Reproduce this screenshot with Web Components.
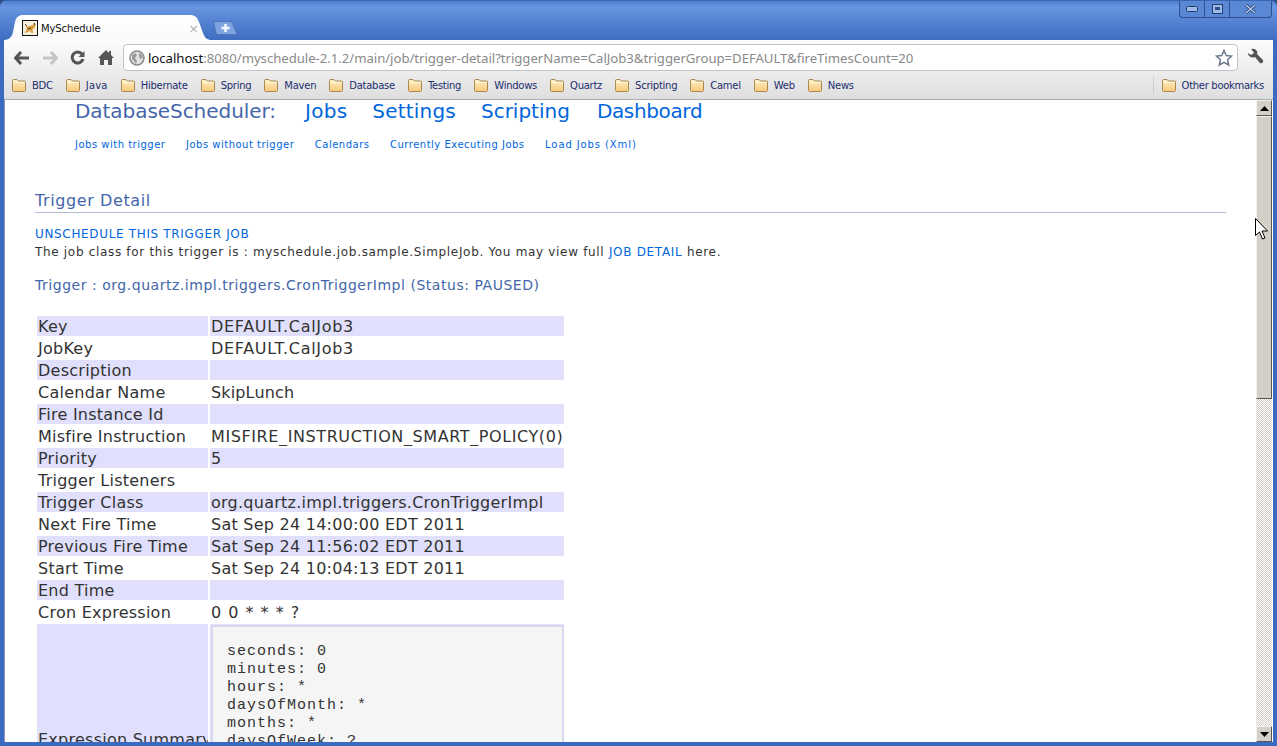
<!DOCTYPE html>
<html>
<head>
<meta charset="utf-8">
<title>MySchedule</title>
<style>
  html, body { margin: 0; height: 100%; overflow: hidden; background: #2f4f86; }
  body { font-family: "DejaVu Sans", Verdana, sans-serif; }
</style>
</head>
<body>
<browser-window>
  <window-tabs slot="tabs"></window-tabs>
  <browser-toolbar slot="toolbar"></browser-toolbar>
  <bookmark-bar slot="bookmarks"></bookmark-bar>
  <page-scrollbar slot="scrollbar"></page-scrollbar>
  <schedule-nav></schedule-nav>
  <trigger-detail></trigger-detail>
</browser-window>

<script>
const folderIcon = `<svg width="16" height="15" viewBox="0 0 16 15" style="flex:none">
  <defs><linearGradient id="fg" x1="0" y1="0" x2="0" y2="1"><stop offset="0" stop-color="#fff0c4"/><stop offset="1" stop-color="#f8c878"/></linearGradient></defs>
  <path d="M1.500 4V2.500q0-1 1-1h3.500l1.500 1.500h6q1 0 1 1v8.500q0 1-1 1h-11q-1 0-1-1z" fill="url(#fg)" stroke="#a58a52"/>
  <path d="M2 4.500h12" stroke="#fff8e0"/>
</svg>`;

class BrowserWindow extends HTMLElement {
  constructor() {
    super();
    this.attachShadow({mode: 'open'}).innerHTML = `<style>
      :host { display: flex; flex-direction: column; position: relative; width: 1277px; height: 746px; overflow: hidden;
              box-sizing: border-box; background: #3a6bc0; border-radius: 7px 7px 0 0; }
      .chrome { background: #e3e3e3; margin: 0 4px; }
      .tabs { margin: 0; }
      .body { flex: 1; min-height: 0; display: flex; margin: 0 4px 4px 4px; background: #fff; border-top: 1px solid #a9acb0; border-left: 1px solid #8c98b0; }
      .page { flex: 1; min-width: 0; overflow: hidden; padding-left: 30px; padding-right: 30px; }
      .cursor { position: absolute; left: 1255px; top: 218px; }
    </style>
    <div class="tabs"><slot name="tabs"></slot></div>
    <div class="chrome"><slot name="toolbar"></slot><slot name="bookmarks"></slot></div>
    <div class="body">
      <div class="page"><slot></slot></div>
      <slot name="scrollbar"></slot>
    </div>
    <svg class="cursor" width="13" height="22" viewBox="0 0 13 22"><path d="M.5.5v17l4-3.500 3 7 2.500-1-3-7h5.500z" fill="#fff" stroke="#000"/></svg>`;
  }
}

class WindowTabs extends HTMLElement {
  constructor() {
    super();
    this.attachShadow({mode: 'open'}).innerHTML = `<style>
      :host { display: flex; height: 40px; background: linear-gradient(#4f80d0 0, #6a97e0 6px, #5a88d6 16px, #3d6cc0 40px);
              border-top: 1px solid #3a65b0; box-sizing: border-box; font: 11px "DejaVu Sans", sans-serif; }
      .strip { flex: 1; display: flex; align-items: flex-end; padding-left: 4px; }
      .tab { width: 208px; height: 25px; box-sizing: border-box; display: flex; align-items: center; gap: 3px; padding: 1px 13px 0 18px;
             background: linear-gradient(#fff, #fafafa);
             clip-path: path('M0 25C6 25 8 21 9 17L11 7C12 2 15 0 19 0H186C191 0 193 2 195 7L199 18C201 23 203 25 208 25Z'); color: #111; }
      .tab span { flex: 1; font-size: 10px; letter-spacing: -.1px; }
      .tab .close { flex: none; color: #b3b3b3; font-size: 13px; }
      .new { margin: 0 0 4px 0; align-self: flex-end; flex: none; display: block; }
      .controls { display: flex; align-self: flex-start; height: 16px; margin-right: 5px; border: 1px solid #2b4f90; border-top: 0; border-radius: 0 0 4px 4px; background: #5a88d4; }
      .controls div { width: 24px; display: flex; align-items: center; justify-content: center; border-left: 1px solid #2b4f90; }
      .controls div:first-child { border-left: 0; }
    </style>
    <div class="strip">
      <div class="tab">
        <svg width="16" height="16" viewBox="0 0 16 16" style="flex:none"><rect x=".5" y=".5" width="15" height="15" fill="#f6f0de" stroke="#111"/><path d="M2.500 13 5 9 4 6l2 .5L11 5l1-2 1.500 1-1 4-2 1 .5 4-2-.5-1-2-2 1.500z" fill="#d99a3c"/><path d="M3 4l2 2M12 3l1 2M6 9l3-1" stroke="#4a3a20"/></svg>
        <span>MySchedule</span><span class="close">×</span>
      </div>
      <svg class="new" width="26" height="16" viewBox="0 0 26 16"><path d="M1.500 1.500H18q2 0 3 3L24.500 13q.5 1.500-1 1.500H6q-1.500 0-2-1.500z" fill="#7ea3e0" stroke="#4f76b8"/><path d="M13.500 4v8M9.500 8h8" stroke="#f4f8ff" stroke-width="2.500"/></svg>
    </div>
    <div class="controls">
      <div><svg width="12" height="6" viewBox="0 0 12 6"><rect x=".5" y=".5" width="11" height="5" rx="1" fill="#9fbce8" stroke="#1f3c70"/></svg></div>
      <div><svg width="11" height="10" viewBox="0 0 11 10"><rect x=".5" y=".5" width="10" height="9" fill="#9fbce8" stroke="#1f3c70"/><rect x="3" y="3" width="5" height="3" fill="#2c4d88"/></svg></div>
      <div style="width:41px"><svg width="11" height="10" viewBox="0 0 11 10"><path d="M1 1l9 8M10 1l-9 8" stroke="#1f3c70" stroke-width="3"/><path d="M1 1l9 8M10 1l-9 8" stroke="#b8cdf0" stroke-width="1.500"/></svg></div>
    </div>`;
  }
}

class BrowserToolbar extends HTMLElement {
  constructor() {
    super();
    this.attachShadow({mode: 'open'}).innerHTML = `<style>
      :host { display: flex; align-items: flex-start; height: 33px; box-sizing: border-box; padding: 4px 0 0 10px;
              background: linear-gradient(#fcfcfc, #ececec); }
      .nav { display: flex; align-items: center; gap: 12px; width: 109px; height: 27px; flex: none; }
      .omnibox { flex: 1; height: 27px; box-sizing: border-box; display: flex; align-items: center; gap: 3px; padding: 0 4px 0 5px;
                 background: #fff; border: 1px solid #bfc3c8; border-radius: 4px; font: 13.200px "Noto Sans", sans-serif; letter-spacing: -.045px; color: #8a8a8a; white-space: nowrap; }
      .url { flex: 1; overflow: hidden; }
      b { font-weight: normal; color: #111; }
      .wrench { margin: 4px 8px 0 9px; flex: none; }
    </style>
    <div class="nav">
      <svg width="16" height="14" viewBox="0 0 16 14"><path d="M7 1 1.500 7 7 13M2 7h13" fill="none" stroke="#555" stroke-width="3"/></svg>
      <svg width="16" height="14" viewBox="0 0 16 14"><path d="M9 1l5.500 6L9 13M14 7H1" fill="none" stroke="#c4c4c4" stroke-width="3"/></svg>
      <svg width="16" height="15" viewBox="0 0 16 15"><path d="M13 9a5.500 5.500 0 1 1-1-5" fill="none" stroke="#555" stroke-width="3"/><path d="M14.500 1v6h-6z" fill="#555"/></svg>
      <svg width="16" height="15" viewBox="0 0 16 15"><path d="M8 0 0 8h2v7h4v-5h4v5h4V8h2l-3-3V1h-2v2z" fill="#555"/></svg>
    </div>
    <div class="omnibox">
      <svg width="16" height="16" viewBox="0 0 16 16" style="flex:none"><circle cx="8" cy="8" r="7" fill="#e2e2e2" stroke="#888" stroke-width="1.500"/><path d="M3 5l3-2 2 2-2 3 2 3-1 3-2-3-2-2zM10 3l3 2 1 3-3 1-1-3z" fill="#9a9a9a"/></svg>
      <div class="url"><b>localhost</b>:8080/myschedule-2.1.2/main/job/trigger-detail?triggerName=CalJob3&amp;triggerGroup=DEFAULT&amp;fireTimesCount=20</div>
      <svg width="18" height="18" viewBox="0 0 18 18" style="flex:none"><path d="M9 1.500l2.300 5 5.200.6-3.900 3.600 1.100 5.300L9 13.300 4.300 16l1.100-5.300L1.500 7.100l5.200-.6z" fill="#fff" stroke="#6d7a8c" stroke-width="1.500"/></svg>
    </div>
    <svg class="wrench" width="18" height="18" viewBox="0 0 18 18"><path d="M1 5l3 2 3-2-2-3-1-1q4-1 6 2 1 2 0 3l6 6q1 2-1 3-2 1-3-1L8 9q-2 1-4 0-3-1-3-4z" fill="#555"/></svg>`;
  }
}

class BookmarkItem extends HTMLElement {
  constructor() {
    super();
    this.attachShadow({mode: 'open'}).innerHTML = `<style>
      :host { display: flex; align-items: center; gap: 5px; white-space: nowrap; }
    </style>${folderIcon}<slot></slot>`;
  }
}

class BookmarkBar extends HTMLElement {
  constructor() {
    super();
    const names = ['BDC','Java','Hibernate','Spring','Maven','Database','Testing','Windows','Quartz','Scripting','Camel','Web','News'];
    this.attachShadow({mode: 'open'}).innerHTML = `<style>
      :host { display: flex; align-items: center; justify-content: space-between; height: 26px; box-sizing: border-box; padding: 0 9px 2px 7px;
              background: linear-gradient(#ececec, #dedede); font: 10px "DejaVu Sans", sans-serif; letter-spacing: -.26px; color: #1b2f70; }
      .list { display: flex; gap: 12px; }
      .other { border-left: 1px solid #cfcfcf; padding-left: 7px; height: 18px; display: flex; align-items: center; letter-spacing: -.3px; }
    </style>
    <div class="list">${names.map(n => `<bookmark-item${n == 'Java' ? ' style="letter-spacing:.2px"' : ''}>${n}</bookmark-item>`).join('')}</div>
    <div class="other"><bookmark-item>Other bookmarks</bookmark-item></div>`;
  }
}

class PageScrollbar extends HTMLElement {
  constructor() {
    super();
    const btn = d => `<div class="btn"><svg width="9" height="5" viewBox="0 0 9 5"><path d="${d}" fill="#000"/></svg></div>`;
    this.attachShadow({mode: 'open'}).innerHTML = `<style>
      :host { display: flex; flex-direction: column; flex: none; width: 16px; margin-right: 1px; background: repeating-conic-gradient(#d4d0c8 0 25%, #fff 0 50%) 0 0/2px 2px; }
      .btn, .thumb { box-sizing: border-box; background: #d4d0c8; border: 1px solid; border-color: #f4f2ee #555 #555 #f4f2ee; }
      .btn { height: 16px; display: flex; align-items: center; justify-content: center; flex: none; }
      .thumb { height: 283px; flex: none; }
      .gap { flex: 1; }
    </style>
    ${btn('M4.500 0 9 5H0z')}<div class="thumb"></div><div class="gap"></div>${btn('M4.500 5 9 0H0z')}`;
  }
}

class ScheduleNav extends HTMLElement {
  constructor() {
    super();
    this.attachShadow({mode: 'open'}).innerHTML = `<style>
      :host { display: block; padding-left: 40px; color: #0066dd; }
      .main { display: flex; gap: 25px; font-size: 20px; line-height: 22px; }
      .brand { color: #4466aa; letter-spacing: -.05px; margin-right: 4px; }
      .sub { display: flex; gap: 20.500px; font-size: 10px; letter-spacing: .5px; line-height: 14px; margin-top: 16px; }
    </style>
    <div class="main"><span class="brand">DatabaseScheduler:</span><span style="letter-spacing:.25px">Jobs</span><span style="letter-spacing:.2px">Settings</span><span>Scripting</span><span style="letter-spacing:-.35px;margin-left:2px">Dashboard</span></div>
    <div class="sub"><span>Jobs with trigger</span><span>Jobs without trigger</span><span>Calendars</span><span>Currently Executing Jobs</span><span style="letter-spacing:.9px">Load Jobs (Xml)</span></div>`;
  }
}

class DetailRow extends HTMLElement {
  constructor() {
    super();
    this.attachShadow({mode: 'open'}).innerHTML = `<style>
      :host { display: grid; grid-template-columns: 171px 354px; column-gap: 2px; margin-bottom: 2px; min-height: 20px; line-height: 18px; white-space: nowrap; letter-spacing: .25px; }
      :host([alt]) .c { background: #e0e0fc; }
      .c { padding: 2px 0 0 1px; }
      .v { overflow: hidden; }
      .l { display: flex; align-items: center; overflow: hidden; }
    </style>
    <div class="c l"><span id="label"></span></div><div class="c v"><slot></slot></div>`;
  }
  connectedCallback() {
    this.shadowRoot.querySelector('#label').textContent = this.getAttribute('label');
  }
}

class TriggerDetail extends HTMLElement {
  constructor() {
    super();
    const rows = [
      ['Key','DEFAULT.CalJob3',.67],['JobKey','DEFAULT.CalJob3',.67],['Description',''],['Calendar Name','SkipLunch',.15],
      ['Fire Instance Id',''],['Misfire Instruction','MISFIRE_INSTRUCTION_SMART_POLICY(0)',.6],['Priority','5'],['Trigger Listeners',''],
      ['Trigger Class','org.quartz.impl.triggers.CronTriggerImpl'],['Next Fire Time','Sat Sep 24 14:00:00 EDT 2011'],
      ['Previous Fire Time','Sat Sep 24 11:56:02 EDT 2011'],['Start Time','Sat Sep 24 10:04:13 EDT 2011'],['End Time',''],['Cron Expression','0 0 * * * ?',1]
    ];
    this.attachShadow({mode: 'open'}).innerHTML = `<style>
      :host { display: block; color: #333; font-size: 13px; }
      a { color: #0066dd; }
      h2 { font-size: 16px; letter-spacing: .6px; font-weight: normal; color: #4466aa; margin: 37px 0 0; padding: 1px 0; border-bottom: 1px solid #b4bcd8; line-height: 21px; }
      .action { margin-top: 12px; line-height: 18px; font-size: 12px; letter-spacing: .66px; }
      .line { line-height: 18px; font-size: 12px; letter-spacing: .68px; }
      h3 { font-size: 14px; letter-spacing: .53px; font-weight: normal; color: #4466aa; margin: 14px 0 0; line-height: 20px; }
      .table { margin: 21px 0 0 2px; font-size: 16px; }
      pre { margin: -1px 0 0; height: 229px; box-sizing: border-box; border: 2px solid #d8d8ee; background: #f5f5f5; padding: 16px 14px 0; font: 15px/18px "Liberation Mono", monospace; letter-spacing: 1px; color: #333; overflow: hidden; }
    </style>
    <h2>Trigger Detail</h2>
    <div class="action"><a>UNSCHEDULE THIS TRIGGER JOB</a></div>
    <div class="line">The job class for this trigger is : myschedule.job.sample.SimpleJob. You may view full <a>JOB DETAIL</a> here.</div>
    <h3>Trigger : org.quartz.impl.triggers.CronTriggerImpl (Status: PAUSED)</h3>
    <div class="table">
      ${rows.map((r, i) => `<detail-row label="${r[0]}" ${i % 2 ? '' : 'alt'}>${r[2] ? `<span style="letter-spacing:${r[2]}px">${r[1]}</span>` : r[1]}</detail-row>`).join('')}
      <detail-row label="Expression Summary" alt><pre>seconds: 0
minutes: 0
hours: *
daysOfMonth: *
months: *
daysOfWeek: ?</pre></detail-row>
    </div>`;
  }
}

customElements.define('browser-window', BrowserWindow);
customElements.define('window-tabs', WindowTabs);
customElements.define('browser-toolbar', BrowserToolbar);
customElements.define('bookmark-item', BookmarkItem);
customElements.define('bookmark-bar', BookmarkBar);
customElements.define('page-scrollbar', PageScrollbar);
customElements.define('schedule-nav', ScheduleNav);
customElements.define('detail-row', DetailRow);
customElements.define('trigger-detail', TriggerDetail);
</script>
</body>
</html>
